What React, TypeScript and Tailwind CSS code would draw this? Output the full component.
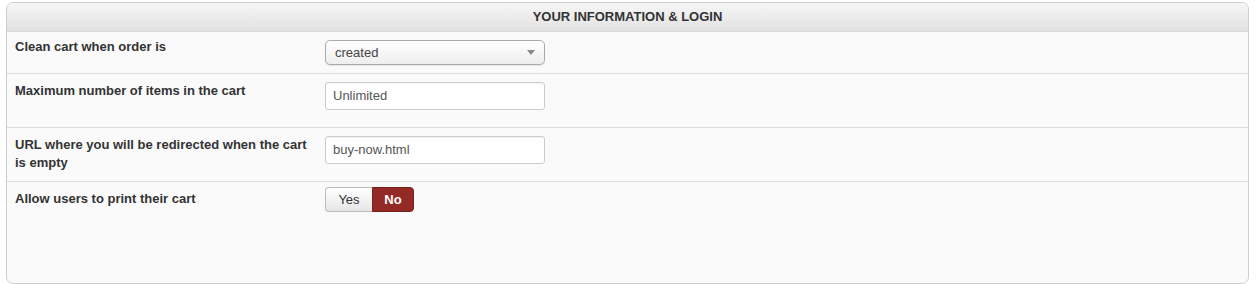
import React from "react";

const font = { fontFamily: '"Liberation Sans", Arial, sans-serif' };

export default function App() {
  return (
    <div className="pl-[6px] pt-[2px]" style={font}>
      <div className="w-[1243px] h-[282px] border border-[#cfcfcf] rounded-[7px] bg-[#fafafa] overflow-hidden flex flex-col">
        <div className="h-[29px] shrink-0 bg-gradient-to-b from-[#f6f6f6] to-[#e2e2e2] border-b border-[#d8d8d8] flex items-center justify-center text-[13px] font-bold text-[#333]">
          YOUR INFORMATION &amp; LOGIN
        </div>

        {/* Row 1 */}
        <div className="h-[42px] shrink-0 flex border-b border-[#dcdcdc]">
          <div className="w-[318px] pl-[8px] pr-[8px] pt-[6px] text-[13px] leading-[18px] font-bold text-[#333]">
            Clean cart when order is
          </div>
          <div className="pt-[8px]">
            <div className="w-[220px] h-[25px] rounded-[5px] border border-[#aaa] bg-gradient-to-b from-[#ffffff] to-[#eeeeee] shadow-[0_1px_1px_rgba(0,0,0,0.08)] flex items-center justify-between pl-[9px] pr-[9px]">
              <span className="text-[13px] text-[#444]">created</span>
              <svg width="8" height="5" viewBox="0 0 8 5">
                <path d="M0 0 L8 0 L4 5 Z" fill="#888" />
              </svg>
            </div>
          </div>
        </div>

        {/* Row 2 */}
        <div className="h-[54px] shrink-0 flex border-b border-[#dcdcdc]">
          <div className="w-[318px] pl-[8px] pr-[8px] pt-[8px] text-[13px] leading-[18px] font-bold text-[#333]">
            Maximum number of items in the cart
          </div>
          <div className="pt-[8px]">
            <div className="w-[220px] h-[28px] rounded-[3px] border border-[#ccc] bg-white shadow-[inset_0_1px_1px_rgba(0,0,0,0.05)] flex items-center pl-[7px] text-[13px] text-[#555]">
              Unlimited
            </div>
          </div>
        </div>

        {/* Row 3 */}
        <div className="h-[54px] shrink-0 flex border-b border-[#dcdcdc]">
          <div className="w-[318px] pl-[8px] pr-[8px] pt-[8px] text-[13px] leading-[18px] font-bold text-[#333]">
            URL where you will be redirected when the cart is empty
          </div>
          <div className="pt-[8px]">
            <div className="w-[220px] h-[28px] rounded-[3px] border border-[#ccc] bg-white shadow-[inset_0_1px_1px_rgba(0,0,0,0.05)] flex items-center pl-[7px] text-[13px] text-[#555]">
              buy-now.html
            </div>
          </div>
        </div>

        {/* Row 4 */}
        <div className="flex-1 flex">
          <div className="w-[318px] pl-[8px] pr-[8px] pt-[8px] text-[13px] leading-[18px] font-bold text-[#333]">
            Allow users to print their cart
          </div>
          <div className="pt-[5px]">
            <div className="flex h-[25px]">
              <div className="w-[47px] h-[25px] rounded-l-[4px] border border-[#bbb] border-r-0 bg-gradient-to-b from-[#ffffff] to-[#e6e6e6] flex items-center justify-center text-[13px] text-[#333]">
                Yes
              </div>
              <div className="w-[42px] h-[25px] rounded-r-[4px] border border-[#7a1f1b] bg-[#942a25] flex items-center justify-center text-[13px] font-bold text-white">
                No
              </div>
            </div>
          </div>
        </div>
      </div>
    </div>
  );
}
